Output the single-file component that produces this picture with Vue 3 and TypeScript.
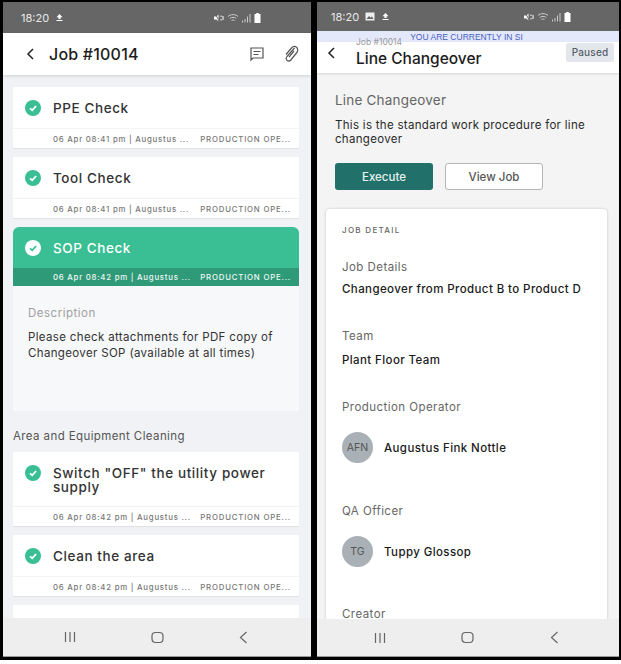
<script setup lang="ts">
interface Task {
  title: string
  time: string
  open?: boolean
}

const firstTasks: Task[] = [
  { title: 'PPE Check', time: '06 Apr 08:41 pm | Augustus ...' },
  { title: 'Tool Check', time: '06 Apr 08:41 pm | Augustus ...' },
  { title: 'SOP Check', time: '06 Apr 08:42 pm | Augustus ...', open: true },
]

const cleaningTasks: Task[] = [
  { title: 'Switch "OFF" the utility power supply', time: '06 Apr 08:42 pm | Augustus ...' },
  { title: 'Clean the area', time: '06 Apr 08:42 pm | Augustus ...' },
]

const people = [
  { role: 'Production Operator', initials: 'AFN', name: 'Augustus Fink Nottle' },
  { role: 'QA Officer', initials: 'TG', name: 'Tuppy Glossop' },
]
</script>

<template>
  <div class="frame">
    <section class="phone phone-left">
      <div class="status-bar">
        <span class="clock">18:20</span>
        <svg class="status-icon" width="9" height="9" viewBox="0 0 9 9"><path d="M4.5 1 7.5 4.2H5.6V6H3.4V4.2H1.5ZM1.5 7H7.5V8H1.5Z" fill="#fff" /></svg>
        <span class="status-right">
          <svg width="10" height="10" viewBox="0 0 10 10" fill="#fff"><path d="M0 3.5 2.5 3.5 4.5 1.5V8.5L2.5 6.5H0Z" /><path d="M1 .5 6 9.5" stroke="#666" stroke-width="1" /><path d="M6.5 2.5H7.5V4H6.5ZM8.5 3H9.5V7H8.5ZM6.5 6H7.5V7.5H6.5Z" /></svg>
          <svg width="12" height="10" viewBox="0 0 12 10" fill="none" stroke="#ccc" stroke-width="1"><path d="M1 3.5C3.5 1 8.5 1 11 3.5M2.8 5.5C4.5 4 7.5 4 9.2 5.5M4.5 7.5C5.3 6.9 6.7 6.9 7.5 7.5" /></svg>
          <svg width="9" height="10" viewBox="0 0 9 10" fill="#ccc"><path d="M0 7.5H1V9.5H0ZM2.5 6H3.5V9.5H2.5ZM5 3.5H6V9.5H5ZM7.5 1H8.5V9.5H7.5Z" /></svg>
          <svg width="7" height="10" viewBox="0 0 7 10" fill="#fff"><path d="M2.2 0H4.8V1H6.5V10H.5V1H2.2Z" /></svg>
        </span>
      </div>

      <header class="job-header">
        <svg class="back" width="9" height="12" viewBox="0 0 9 12" fill="none" stroke="#222" stroke-width="1.5"><path d="M7 1 2 6 7 11" /></svg>
        <h1 class="job-title">Job #10014</h1>
        <svg class="header-icon comment" width="16" height="16" viewBox="0 0 16 16" fill="none" stroke="#555" stroke-width="1.2"><path d="M2 2H14V12H4L2 14Z" /><path d="M4.5 5.5H11.5M4.5 8.5H9.5" /></svg>
        <svg class="header-icon" width="16" height="18" viewBox="0 0 16 18" fill="none" stroke="#555" stroke-width="1.2"><path d="M11.5 3 4 11.5C2.8 13 3 14.6 4.2 15.5 5.5 16.4 6.8 16 7.8 15L13.5 8C15.3 5.8 15 3.5 13.5 2.3 12 1.1 10 1.3 8.5 3L3 9.5M11 6 6 12.2" /></svg>
      </header>

      <main class="task-list">
        <template v-for="task in firstTasks" :key="task.title">
          <article class="task" :class="{ 'task-open': task.open }">
            <div class="task-main">
              <span class="check">
                <svg width="14" height="14" viewBox="0 0 14 14" fill="none" stroke-width="1.8" :stroke="task.open ? '#3abf94' : '#fff'"><path d="M4 7.3 6.2 9.3 10.1 5" /></svg>
              </span>
              <span class="task-title">{{ task.title }}</span>
            </div>
            <div class="task-meta">
              <span>{{ task.time }}</span>
              <span class="meta-role">PRODUCTION OPE...</span>
            </div>
          </article>
          <div v-if="task.open" class="task-detail">
            <div class="detail-label">Description</div>
            <p class="detail-text">Please check attachments for PDF copy of Changeover SOP (available at all times)</p>
          </div>
        </template>

        <h2 class="section-title">Area and Equipment Cleaning</h2>

        <article v-for="task in cleaningTasks" :key="task.title" class="task">
          <div class="task-main">
            <span class="check">
              <svg width="14" height="14" viewBox="0 0 14 14" fill="none" stroke="#fff" stroke-width="1.8"><path d="M4 7.3 6.2 9.3 10.1 5" /></svg>
            </span>
            <span class="task-title">{{ task.title }}</span>
          </div>
          <div class="task-meta">
            <span>{{ task.time }}</span>
            <span class="meta-role">PRODUCTION OPE...</span>
          </div>
        </article>
        <article class="task">
          <div class="task-main">
            <span class="check check-idle"></span>
          </div>
        </article>
      </main>

      <nav class="nav-bar nav-left">
        <svg width="12" height="12" viewBox="0 0 12 12" stroke="#666" stroke-width="1.2"><path d="M1.5 1V11M6 1V11M10.5 1V11" /></svg>
        <svg width="13" height="13" viewBox="0 0 13 13" fill="none" stroke="#666" stroke-width="1.2"><rect x="1" y="1.5" width="11" height="10" rx="3.5" /></svg>
        <svg width="9" height="13" viewBox="0 0 9 13" fill="none" stroke="#666" stroke-width="1.2"><path d="M7.5 1 1.5 6.5 7.5 12" /></svg>
      </nav>
    </section>

    <section class="phone phone-right">
      <div class="status-bar status-short">
        <span class="clock">18:20</span>
        <svg class="status-icon" width="10" height="9" viewBox="0 0 10 9"><path d="M.5.5H9.5V8.5H.5Z" fill="#eee" /><path d="M1.5 7 4 4 5.5 5.5 7 4.5 8.5 7Z" fill="#666" /></svg>
        <svg class="status-icon" width="9" height="9" viewBox="0 0 9 9"><path d="M4.5 1 7.5 4.2H5.6V6H3.4V4.2H1.5ZM1.5 7H7.5V8H1.5Z" fill="#fff" /></svg>
        <span class="status-right">
          <svg width="10" height="10" viewBox="0 0 10 10" fill="#fff"><path d="M0 3.5 2.5 3.5 4.5 1.5V8.5L2.5 6.5H0Z" /><path d="M1 .5 6 9.5" stroke="#666" stroke-width="1" /><path d="M6.5 2.5H7.5V4H6.5ZM8.5 3H9.5V7H8.5ZM6.5 6H7.5V7.5H6.5Z" /></svg>
          <svg width="12" height="10" viewBox="0 0 12 10" fill="none" stroke="#ccc" stroke-width="1"><path d="M1 3.5C3.5 1 8.5 1 11 3.5M2.8 5.5C4.5 4 7.5 4 9.2 5.5M4.5 7.5C5.3 6.9 6.7 6.9 7.5 7.5" /></svg>
          <svg width="9" height="10" viewBox="0 0 9 10" fill="#ccc"><path d="M0 7.5H1V9.5H0ZM2.5 6H3.5V9.5H2.5ZM5 3.5H6V9.5H5ZM7.5 1H8.5V9.5H7.5Z" /></svg>
          <svg width="7" height="10" viewBox="0 0 7 10" fill="#fff"><path d="M2.2 0H4.8V1H6.5V10H.5V1H2.2Z" /></svg>
        </span>
      </div>
      <div class="sim-banner">YOU ARE CURRENTLY IN SI</div>

      <header class="run-header">
        <svg class="run-back" width="9" height="12" viewBox="0 0 9 12" fill="none" stroke="#222" stroke-width="1.5"><path d="M7 1 2 6 7 11" /></svg>
        <div class="run-titles">
          <div class="run-number">Job #10014</div>
          <div class="run-title">Line Changeover</div>
        </div>
        <span class="paused">Paused</span>
      </header>

      <main class="run-body">
        <div class="run-name">Line Changeover</div>
        <p class="run-desc">This is the standard work procedure for line changeover</p>
        <div class="run-actions">
          <button class="btn btn-execute">Execute</button>
          <button class="btn btn-view">View Job</button>
        </div>

        <div class="detail-card">
          <div class="card-heading">JOB DETAIL</div>

          <div class="field field-first">
            <div class="field-label">Job Details</div>
            <div class="field-value">Changeover from Product B to Product D</div>
          </div>
          <div class="field">
            <div class="field-label">Team</div>
            <div class="field-value">Plant Floor Team</div>
          </div>
          <div v-for="person in people" :key="person.role" class="field field-person">
            <div class="field-label">{{ person.role }}</div>
            <div class="person">
              <span class="avatar">{{ person.initials }}</span>
              <span class="field-value">{{ person.name }}</span>
            </div>
          </div>
          <div class="field field-creator">
            <div class="field-label">Creator</div>
          </div>
        </div>
      </main>

      <nav class="nav-bar nav-right">
        <svg width="12" height="12" viewBox="0 0 12 12" stroke="#666" stroke-width="1.2"><path d="M1.5 1V11M6 1V11M10.5 1V11" /></svg>
        <svg width="13" height="13" viewBox="0 0 13 13" fill="none" stroke="#666" stroke-width="1.2"><rect x="1" y="1.5" width="11" height="10" rx="3.5" /></svg>
        <svg width="9" height="13" viewBox="0 0 9 13" fill="none" stroke="#666" stroke-width="1.2"><path d="M7.5 1 1.5 6.5 7.5 12" /></svg>
      </nav>
    </section>
  </div>
</template>

<style>
html,
body {
  background: #fff;
}
</style>

<style scoped>
.frame {
  display: flex;
  gap: 6px;
  height: 660px;
  padding: 2px 2px 3px 3px;
  box-sizing: border-box;
  background: #000;
  font-family: Inter, "Open Sans", sans-serif;
  color: #222;
}

.phone {
  display: flex;
  flex-direction: column;
  overflow: hidden;
  border-bottom: 1px solid #999;
}

.phone-left {
  width: 308px;
  background: #f0f2f5;
}

.phone-right {
  width: 302px;
  background: #f4f4f4;
}

.status-bar {
  flex: none;
  height: 31px;
  display: flex;
  align-items: center;
  gap: 6px;
  padding: 0 50px 0 18px;
  background: #666;
  color: #e8e8e8;
  font-size: 11px;
}

.status-short {
  height: 29px;
  padding-left: 14px;
  padding-right: 48px;
}

.status-icon {
  flex: none;
}

.status-right {
  margin-left: auto;
  display: flex;
  align-items: center;
  gap: 3px;
}

.job-header {
  flex: none;
  height: 42px;
  display: flex;
  align-items: center;
  padding: 0 12px 0 23px;
  background: #fff;
  box-shadow: 0 1px 3px rgba(0, 0, 0, 0.15);
  position: relative;
}

.job-title {
  margin: 0 0 0 14px;
  flex: 1;
  font-size: 16px;
  font-weight: 500;
  letter-spacing: 0.2px;
  color: #1c1c1c;
}

.header-icon {
  flex: none;
}

.comment {
  margin-right: 18px;
}

.task-list {
  flex: 1;
  min-height: 0;
  overflow: hidden;
  padding: 12px 12px 0 10px;
}

.task {
  background: #fff;
  margin-bottom: 9px;
  box-shadow: 0 1px 1px rgba(0, 0, 0, 0.06);
}

.task-main {
  display: flex;
  gap: 12px;
  padding: 13px 12px 12px;
  border-bottom: 1px solid #f2f3f5;
}

.check {
  flex: none;
  width: 16px;
  height: 16px;
  border-radius: 50%;
  background: #3abf94;
  display: flex;
  align-items: center;
  justify-content: center;
}

.check-idle {
  background: #ccc;
}

.task-title {
  padding-top: 1px;
  font-size: 13.5px;
  line-height: 14px;
  font-weight: 500;
  letter-spacing: 0.6px;
  color: #333;
}

.task-meta {
  height: 19px;
  display: flex;
  align-items: center;
  justify-content: space-between;
  padding: 0 8px 0 40px;
  font-size: 7.8px;
  font-weight: 500;
  letter-spacing: 0.76px;
  color: #777;
}

.meta-role {
  letter-spacing: 0.8px;
}

.task-open {
  margin-bottom: 0;
  border-radius: 6px 6px 0 0;
  background: #3abf94;
  overflow: hidden;
}

.task-open .task-main {
  border-bottom: 0;
}

.task-open .check {
  background: #fff;
}

.task-open .task-title {
  color: #fff;
}

.task-open .task-meta {
  height: 18px;
  background: #2f9a78;
  color: #f0f8f5;
}

.task-detail {
  height: 125px;
  box-sizing: border-box;
  padding: 20px 15px 0;
  background: #f7f8fa;
}

.detail-label {
  font-size: 11.5px;
  letter-spacing: 0.5px;
  color: #a0a0a0;
}

.detail-text {
  margin: 9px 0 0;
  font-size: 11.5px;
  line-height: 16px;
  letter-spacing: 0.35px;
  color: #333;
}

.section-title {
  margin: 18px 0 9px;
  font-size: 11.5px;
  line-height: 14px;
  font-weight: 400;
  letter-spacing: 0.4px;
  color: #555;
}

.nav-bar {
  flex: none;
  height: 37px;
  display: flex;
  align-items: center;
  justify-content: space-between;
  background: #eee;
  position: relative;
}

.nav-left {
  height: 38px;
  padding: 0 63.5px 0 61px;
}

.nav-right {
  padding: 0 60.5px 0 57px;
}

.sim-banner {
  flex: none;
  height: 11px;
  padding-right: 3px;
  background: #e3e8fb;
  font-family: "Liberation Sans", Arial, sans-serif;
  font-size: 8.5px;
  line-height: 12px;
  text-align: center;
  color: #4a5fc1;
}

.run-header {
  flex: none;
  height: 31px;
  display: flex;
  align-items: flex-start;
  padding: 0 5px 0 10px;
  background: #fff;
  box-shadow: 0 1px 2px rgba(0, 0, 0, 0.12);
  position: relative;
}

.run-back {
  flex: none;
  margin-top: 5px;
}

.run-titles {
  flex: 1;
  margin-left: 20px;
  margin-top: -5px;
}

.run-number {
  font-size: 8.5px;
  line-height: 10px;
  color: #9a9a9a;
}

.run-title {
  margin-top: 3px;
  font-size: 15.5px;
  line-height: 18px;
  font-weight: 500;
  color: #1c1c1c;
}

.paused {
  margin-top: 1px;
  width: 48px;
  height: 19px;
  border-radius: 2px;
  background: #e3e7ec;
  font-size: 10px;
  line-height: 19px;
  font-weight: 500;
  letter-spacing: 0.2px;
  text-align: center;
  color: #55606a;
}

.run-body {
  flex: 1;
  min-height: 0;
  overflow: hidden;
  padding: 19px 12px 0 9px;
}

.run-name {
  margin-left: 9px;
  font-size: 13.5px;
  line-height: 16px;
  letter-spacing: 0.2px;
  color: #666;
}

.run-desc {
  margin: 10px 0 0 9px;
  font-size: 11.5px;
  line-height: 14px;
  letter-spacing: 0.3px;
  color: #2a2a2a;
}

.run-actions {
  display: flex;
  gap: 12px;
  margin: 17px 0 0 9px;
}

.btn {
  width: 98px;
  height: 27px;
  padding: 0;
  border-radius: 3px;
  font-family: inherit;
  font-size: 11.5px;
  font-weight: 500;
}

.btn-execute {
  border: 0;
  background: #22706a;
  color: #e8f3f1;
}

.btn-view {
  border: 1px solid #b5b5b5;
  background: #fff;
  color: #555;
}

.detail-card {
  margin-top: 19px;
  padding: 16px 16px 0;
  height: 500px;
  background: #fff;
  border-radius: 4px;
  box-shadow: 0 0 3px rgba(0, 0, 0, 0.2);
}

.card-heading {
  font-size: 8px;
  line-height: 10px;
  font-weight: 500;
  letter-spacing: 1.3px;
  color: #666;
}

.field {
  margin-top: 33px;
}

.field-first {
  margin-top: 25px;
}

.field-first .field-value {
  margin-top: 8px;
}

.field-person {
  margin-top: 33px;
}

.field-person + .field-person {
  margin-top: 41px;
}

.field-creator {
  margin-top: 40px;
}

.field-label {
  font-size: 11.5px;
  line-height: 14px;
  letter-spacing: 0.45px;
  color: #666;
}

.field-value {
  margin-top: 10px;
  font-size: 11.5px;
  line-height: 14px;
  font-weight: 500;
  letter-spacing: 0.4px;
  color: #1a1a1a;
}

.person {
  display: flex;
  align-items: center;
  gap: 11px;
  margin-top: 18px;
}

.person .field-value {
  margin-top: 0;
}

.avatar {
  width: 31px;
  height: 31px;
  border-radius: 50%;
  background: #a9b1b6;
  display: flex;
  align-items: center;
  justify-content: center;
  font-size: 10.5px;
  color: #555;
}
</style>
